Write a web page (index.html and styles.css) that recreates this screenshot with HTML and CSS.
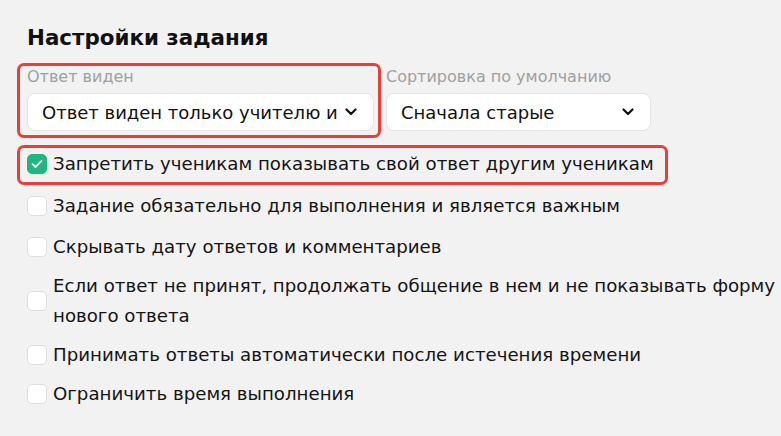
FILE: index.html
```html
<!DOCTYPE html>
<html lang="ru">
<head>
    <meta charset="UTF-8">
    <meta name="viewport" content="width=device-width, initial-scale=1.0">
    <title>Настройки задания</title>
    <link rel="stylesheet" href="styles.css">
</head>
<body>

<div class="settings">
    <h1 class="title">Настройки задания</h1>

    <div class="fields">
        <div class="field field-first marked">
            <div class="field-label">Ответ виден</div>
            <div class="select">
                <span class="select-value">Ответ виден только учителю и</span>
                <svg class="chevron" width="12" height="8" viewBox="0 0 12 8"><path d="M1.5 1.5 L6 6 L10.5 1.5" fill="none" stroke="#111" stroke-width="2.2" stroke-linecap="round" stroke-linejoin="round"/></svg>
            </div>
        </div>
        <div class="field field-second">
            <div class="field-label">Сортировка по умолчанию</div>
            <div class="select">
                <span class="select-value">Сначала старые</span>
                <svg class="chevron" width="12" height="8" viewBox="0 0 12 8"><path d="M1.5 1.5 L6 6 L10.5 1.5" fill="none" stroke="#111" stroke-width="2.2" stroke-linecap="round" stroke-linejoin="round"/></svg>
            </div>
        </div>
    </div>

    <div class="options">
        <label class="option option-first marked">
            <span class="box checked">
                <svg width="12" height="10" viewBox="0 0 12 10"><path d="M1.5 5.2 L4.5 8 L10.5 1.8" fill="none" stroke="#fff" stroke-width="1.8" stroke-linecap="round" stroke-linejoin="round"/></svg>
            </span>
            <span class="option-text">Запретить ученикам показывать свой ответ другим ученикам</span>
        </label>
        <label class="option option-second">
            <span class="box"></span>
            <span class="option-text">Задание обязательно для выполнения и является важным</span>
        </label>
        <label class="option">
            <span class="box"></span>
            <span class="option-text">Скрывать дату ответов и комментариев</span>
        </label>
        <label class="option">
            <span class="box"></span>
            <span class="option-text">Если ответ не принят, продолжать общение в нем и не показывать форму нового ответа</span>
        </label>
        <label class="option">
            <span class="box"></span>
            <span class="option-text">Принимать ответы автоматически после истечения времени</span>
        </label>
        <label class="option">
            <span class="box"></span>
            <span class="option-text">Ограничить время выполнения</span>
        </label>
    </div>
</div>

</body>
</html>
```

FILE: styles.css
```css
body {
    margin: 0;
    overflow: hidden;
    background-color: #f2f2f2;
    font-family: 'DejaVu Sans', sans-serif;
    color: #141414;
}
.settings {
    width: 755px;
    padding: 23px 0 0 27px;
}
.title {
    margin: 0;
    font-size: 21.4px;
    line-height: 30px;
    font-weight: bold;
    color: #111;
}
.fields {
    display: flex;
    gap: 12px;
    margin-top: 14px;
}
.field {
    position: relative;
}
.field-first {
    width: 347px;
}
.field-second {
    width: 265px;
}
.field-label {
    font-size: 16px;
    line-height: 20px;
    color: #a0a0a0;
}
.select {
    display: flex;
    align-items: center;
    height: 38px;
    margin-top: 6px;
    padding: 0 16px 0 14px;
    background: #fff;
    border: 1px solid #e4e4e4;
    border-radius: 8px;
    box-sizing: border-box;
}
.select-value {
    flex: 1;
    overflow: hidden;
    white-space: nowrap;
    font-size: 18px;
    color: #111;
    margin-right: 4px;
}
.chevron {
    flex: none;
}
.options {
    display: flex;
    flex-direction: column;
    gap: 9px;
    margin-top: 18px;
}
.option {
    position: relative;
    display: flex;
    align-items: center;
    gap: 6px;
    font-size: 18.2px;
    line-height: 30px;
}
.option-first {
    align-self: flex-start;
    margin-bottom: 3px;
}
.option-second {
    margin-bottom: 2px;
}
.box {
    flex: none;
    display: flex;
    align-items: center;
    justify-content: center;
    width: 20px;
    height: 20px;
    background: #fff;
    border: 1px solid #dedede;
    border-radius: 5px;
    box-sizing: border-box;
}
.box.checked {
    background: #1fb67f;
    border-color: #1fb67f;
}

/* red frames drawn around highlighted settings */
.marked::after {
    content: "";
    position: absolute;
    border: 3px solid #e5413a;
    border-radius: 7px;
    pointer-events: none;
}
.field.marked::after {
    top: -4px;
    left: -10px;
    right: -7px;
    bottom: -7px;
}
.option.marked::after {
    top: -4px;
    left: -10px;
    right: -14px;
    bottom: -6px;
}
```
